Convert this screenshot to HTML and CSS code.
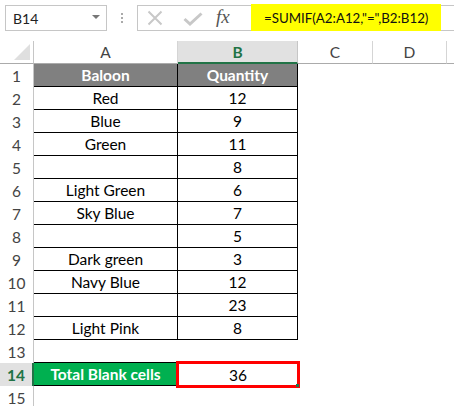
FILE: index.html
```html
<!DOCTYPE html>
<html>
<head>
<meta charset="utf-8">
<link rel="stylesheet" href="styles.css">
</head>
<body>
<div class="toolbar">
  <div class="namebox"><span class="ref">B14</span><span class="caret"></span></div>
  <div class="dots"><i></i><i></i><i></i></div>
  <div class="fbar">
    <div class="icons">
      <svg class="ico-x" width="16" height="16" viewBox="0 0 16 16"><path d="M1.5 1.5 L14.5 14.5 M14.5 1.5 L1.5 14.5" stroke="#c8c8c8" stroke-width="2" fill="none"/></svg>
      <svg class="ico-ok" width="20" height="14" viewBox="0 0 20 14"><path d="M1.5 7 L7 12 L18.5 1.5" stroke="#c8c8c8" stroke-width="3" fill="none"/></svg>
      <span class="fx">fx</span>
    </div>
    <div class="formula">=SUMIF(A2:A12,"=",B2:B12)</div>
  </div>
</div>
<div class="sheet">
  <div class="corner"><span class="tri"></span></div>
  <div class="ch">A</div>
  <div class="ch sel">B</div>
  <div class="ch">C</div>
  <div class="ch">D</div>
  <div class="ch end"></div>

  <div class="rh">1</div><div class="c hd">Baloon</div><div class="c hd">Quantity</div><div class="e"></div><div class="e"></div><div class="e"></div>
  <div class="rh">2</div><div class="c">Red</div><div class="c">12</div><div class="e"></div><div class="e"></div><div class="e"></div>
  <div class="rh">3</div><div class="c">Blue</div><div class="c">9</div><div class="e"></div><div class="e"></div><div class="e"></div>
  <div class="rh">4</div><div class="c">Green</div><div class="c">11</div><div class="e"></div><div class="e"></div><div class="e"></div>
  <div class="rh">5</div><div class="c"></div><div class="c">8</div><div class="e"></div><div class="e"></div><div class="e"></div>
  <div class="rh">6</div><div class="c">Light Green</div><div class="c">6</div><div class="e"></div><div class="e"></div><div class="e"></div>
  <div class="rh">7</div><div class="c">Sky Blue</div><div class="c">7</div><div class="e"></div><div class="e"></div><div class="e"></div>
  <div class="rh">8</div><div class="c"></div><div class="c">5</div><div class="e"></div><div class="e"></div><div class="e"></div>
  <div class="rh">9</div><div class="c">Dark green</div><div class="c">3</div><div class="e"></div><div class="e"></div><div class="e"></div>
  <div class="rh">10</div><div class="c">Navy Blue</div><div class="c">12</div><div class="e"></div><div class="e"></div><div class="e"></div>
  <div class="rh">11</div><div class="c"></div><div class="c">23</div><div class="e"></div><div class="e"></div><div class="e"></div>
  <div class="rh">12</div><div class="c">Light Pink</div><div class="c">8</div><div class="e"></div><div class="e"></div><div class="e"></div>
  <div class="rh">13</div><div class="e line"></div><div class="e"></div><div class="e"></div><div class="e"></div><div class="e"></div>
  <div class="rh sel">14</div><div class="c total">Total Blank cells</div><div class="c active">36<span class="handle"></span></div><div class="e"></div><div class="e"></div><div class="e"></div>
  <div class="rh">15</div><div class="e"></div><div class="e"></div><div class="e"></div><div class="e"></div><div class="e"></div>
</div>
</body>
</html>
```

FILE: styles.css
```css
* { box-sizing: border-box; }
html, body { margin: 0; padding: 0; background: #fff; }
body {
  font-family: Lato, "Open Sans", sans-serif;
  color: #000;
  width: 454px;
  height: 406px;
  overflow: hidden;
}
.toolbar {
  height: 41px;
  padding: 5px 0 0 5px;
  display: flex;
  align-items: flex-start;
}
.namebox {
  width: 102px;
  height: 26px;
  border: 1px solid #c6c6c6;
  display: flex;
  align-items: center;
  justify-content: space-between;
  padding: 0 6px 0 7px;
  font-size: 14px;
  color: #222;
}
.caret {
  width: 0; height: 0;
  border-left: 4px solid transparent;
  border-right: 4px solid transparent;
  border-top: 4px solid #777;
  margin-top: -2px;
}
.dots {
  width: 30px;
  height: 26px;
  display: flex;
  flex-direction: column;
  align-items: center;
  justify-content: center;
  gap: 2px;
}
.dots i { display: block; width: 2px; height: 2px; background: #aaa; }
.fbar {
  flex: 1;
  height: 26px;
  border: 1px solid #c6c6c6;
  border-right: none;
  display: flex;
  align-items: stretch;
}
.icons {
  width: 113px;
  display: flex;
  align-items: center;
  padding-left: 9px;
}
.ico-x { margin-right: 20px; }
.ico-ok { margin-right: 13px; margin-top: 1px; }
.fx {
  font-family: "Liberation Serif", serif;
  font-style: italic;
  font-size: 19px;
  color: #555;
  margin-top: -3px;
}
.formula {
  width: 190px;
  margin: -2px 0 -1px;
  background: #ffff00;
  display: flex;
  align-items: center;
  padding-left: 13px;
  font-size: 13.3px;
  color: #111;
  white-space: nowrap;
}
.sheet {
  display: grid;
  grid-template-columns: 34px 144px 120px 75px 74px 1fr;
  grid-template-rows: 23px;
  grid-auto-rows: 23px;
  font-size: 15.5px;
}
.corner {
  border-right: 1px solid #c6c6c6;
  border-bottom: 1px solid #ababab;
  position: relative;
}
.tri {
  position: absolute;
  right: 3px;
  bottom: 3px;
  width: 0; height: 0;
  border-left: 16px solid transparent;
  border-bottom: 16px solid #dfdfdf;
}
.ch {
  border-right: 1px solid #d5d5d5;
  border-bottom: 1px solid #ababab;
  display: flex;
  align-items: center;
  justify-content: center;
  color: #444;
}
.ch.sel {
  background: #e1e1e1;
  color: #217346;
  font-weight: bold;
  border-bottom: 2px solid #217346;
  border-right-color: #c6c6c6;
  padding-top: 1px;
}
.ch.end { border-right: none; }
.rh {
  border-right: 1px solid #c6c6c6;
  display: flex;
  align-items: center;
  justify-content: center;
  color: #444;
}
.rh.sel {
  background: #e1e1e1;
  color: #217346;
  font-weight: bold;
  border-right: 2px solid #217346;
}
.c {
  border-right: 1px solid #000;
  border-bottom: 1px solid #000;
  display: flex;
  align-items: center;
  justify-content: center;
  white-space: nowrap;
}
.c.hd {
  background: #808080;
  color: #fff;
  font-weight: bold;
}
.e.line { border-bottom: 1px solid #000; }
.c.total {
  background: #00b050;
  color: #fff;
  font-weight: bold;
}
.c.active {
  position: relative;
  border: none;
  outline: 3px solid #ff0000;
  outline-offset: -1px;
}
.handle {
  position: absolute;
  right: -1px;
  bottom: -1px;
  width: 3px;
  height: 3px;
  background: #217346;
}
```
